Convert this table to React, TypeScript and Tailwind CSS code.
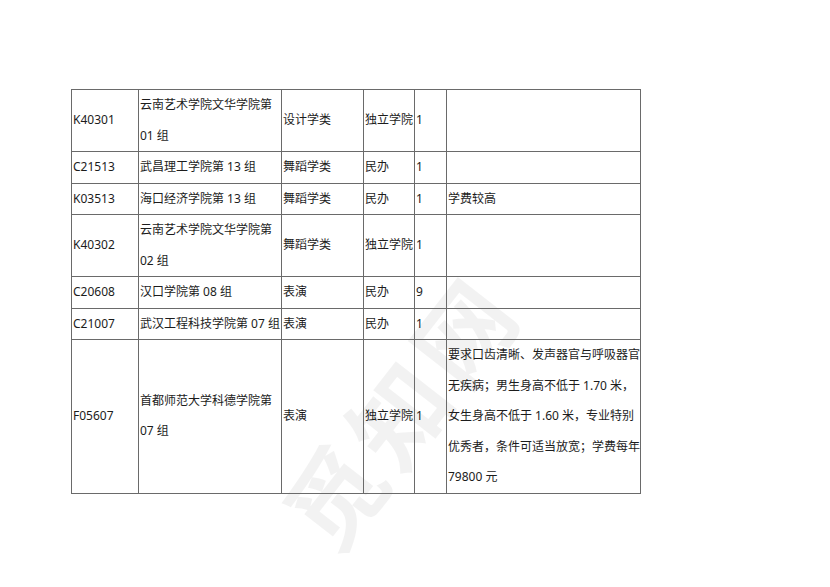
import React from "react";

type Row = {
  code: string;
  school: string[];
  major: string;
  kind: string;
  count: string;
  note: string[];
};

const rows: Row[] = [
  { code: "K40301", school: ["云南艺术学院文华学院第", "01 组"], major: "设计学类", kind: "独立学院", count: "1", note: [] },
  { code: "C21513", school: ["武昌理工学院第 13 组"], major: "舞蹈学类", kind: "民办", count: "1", note: [] },
  { code: "K03513", school: ["海口经济学院第 13 组"], major: "舞蹈学类", kind: "民办", count: "1", note: ["学费较高"] },
  { code: "K40302", school: ["云南艺术学院文华学院第", "02 组"], major: "舞蹈学类", kind: "独立学院", count: "1", note: [] },
  { code: "C20608", school: ["汉口学院第 08 组"], major: "表演", kind: "民办", count: "9", note: [] },
  { code: "C21007", school: ["武汉工程科技学院第 07 组"], major: "表演", kind: "民办", count: "1", note: [] },
  {
    code: "F05607",
    school: ["首都师范大学科德学院第", "07 组"],
    major: "表演",
    kind: "独立学院",
    count: "1",
    note: [
      "要求口齿清晰、发声器官与呼吸器官",
      "无疾病；男生身高不低于 1.70 米，",
      "女生身高不低于 1.60 米，专业特别",
      "优秀者，条件可适当放宽；学费每年",
      "79800 元",
    ],
  },
];

const cell = "border border-[#6a6a6a] pl-px pr-0 py-0 align-middle whitespace-nowrap";

function Lines({ lines }: { lines: string[] }) {
  return (
    <>
      {lines.map((l, i) => (
        <div key={i}>{l}</div>
      ))}
    </>
  );
}

export default function App() {
  return (
    <main
      className="relative h-[587px] w-[830px] overflow-hidden bg-white pl-[71px] pt-[89px] text-[12px] leading-[30.5px] text-[#1c1c1c]"
      style={{ fontFamily: '"Noto Sans", "Noto Sans CJK SC", sans-serif' }}
    >
      {/* faint diagonal watermark, sits under the table text */}
      <div className="pointer-events-none absolute left-[402px] top-[412px] -translate-x-1/2 -translate-y-1/2 -rotate-[52deg] select-none whitespace-nowrap text-[96px] font-bold leading-none tracking-[8px] text-black/[0.05]">
        觅知网
      </div>

      <table className="relative w-[569px] table-fixed border-collapse">
        <colgroup>
          <col className="w-[67px]" />
          <col className="w-[143px]" />
          <col className="w-[82px]" />
          <col className="w-[51px]" />
          <col className="w-[32px]" />
          <col className="w-[194px]" />
        </colgroup>
        <tbody>
          {rows.map((r) => (
            <tr key={r.code}>
              <td className={cell}>{r.code}</td>
              <td className={cell}>
                <Lines lines={r.school} />
              </td>
              <td className={cell}>{r.major}</td>
              <td className={cell}>{r.kind}</td>
              <td className={cell}>{r.count}</td>
              <td className={cell}>
                <Lines lines={r.note} />
              </td>
            </tr>
          ))}
        </tbody>
      </table>
    </main>
  );
}
